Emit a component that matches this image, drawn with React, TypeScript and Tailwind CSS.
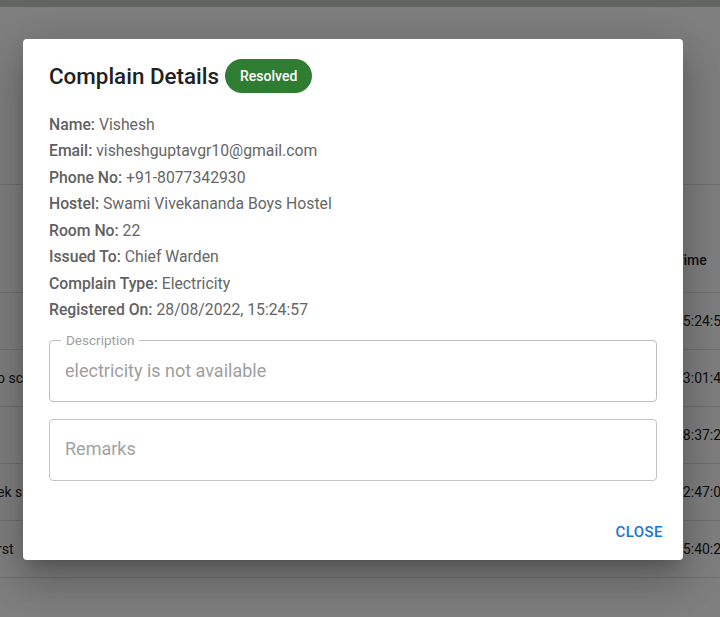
import React from "react";

const details: [string, string][] = [
  ["Name:", "Vishesh"],
  ["Email:", "visheshguptavgr10@gmail.com"],
  ["Phone No:", "+91-8077342930"],
  ["Hostel:", "Swami Vivekananda Boys Hostel"],
  ["Room No:", "22"],
  ["Issued To:", "Chief Warden"],
  ["Complain Type:", "Electricity"],
  ["Registered On:", "28/08/2022, 15:24:57"],
];

const rows: [string, string][] = [
  ["", "15:24:57"],
  ["o school is not open", "13:01:45"],
  ["", "18:37:21"],
  ["ek sink is broken", "12:47:03"],
  ["rst", "15:40:22"],
];

export default function App() {
  return (
    <div
      className="relative w-[720px] h-[617px] overflow-hidden bg-white"
      style={{ fontFamily: "Roboto, 'Liberation Sans', sans-serif" }}
    >
      {/* background page */}
      <div className="h-[7px] bg-[#c2ccc6]" />
      <div className="h-[177px]" />
      <div className="border-t border-[#e0e0e0]">
        <div className="grid grid-cols-[675px_1fr] h-[107px] items-end pb-[22px] text-[14px] leading-[20px] font-medium text-[#212121] whitespace-nowrap">
          <div />
          <div>Time</div>
        </div>
        {rows.map(([l, r], i) => (
          <div
            key={i}
            className="grid grid-cols-[675px_1fr] h-[57px] items-center border-t border-[#e0e0e0] text-[14px] leading-[20px] text-[#212121] whitespace-nowrap"
          >
            <div className="-ml-[3px] overflow-hidden">{l}</div>
            <div>{r}</div>
          </div>
        ))}
        <div className="border-t border-[#e0e0e0]" />
      </div>

      {/* backdrop */}
      <div className="absolute inset-0 bg-black/50" />

      {/* dialog */}
      <div className="absolute left-[23px] top-[39px] w-[660px] h-[521px] bg-white rounded-[4px] shadow-[0px_11px_15px_-7px_rgba(0,0,0,0.2),0px_24px_38px_3px_rgba(0,0,0,0.14),0px_9px_46px_8px_rgba(0,0,0,0.12)] flex flex-col">
        <div className="pt-[20px] px-[26px]">
          <div className="flex items-center h-[34px] gap-[6px]">
            <span className="text-[22.4px] leading-[30px] font-medium text-[#212121]">
              Complain Details
            </span>
            <span className="h-[34px] px-[15px] rounded-full bg-[#2e7d32] text-white text-[14px] font-medium flex items-center">
              Resolved
            </span>
          </div>

          <div className="mt-[19px] text-[15.75px] leading-[26.43px] text-[#666666]">
            {details.map(([k, v]) => (
              <div key={k}>
                <span className="font-medium text-[#616161]">{k}</span> {v}
              </div>
            ))}
          </div>

          <div className="relative mt-[16px] h-[62px] border border-[#bdbdbd] rounded-[4px] flex items-center px-[15px]">
            <span className="absolute left-[11px] -top-[10px] px-[5px] bg-white text-[13.5px] leading-[18px] text-[#9e9e9e]">
              Description
            </span>
            <span className="text-[18px] leading-[24px] text-[#9e9e9e]">
              electricity is not available
            </span>
          </div>

          <div className="mt-[17px] h-[62px] border border-[#c4c4c4] rounded-[4px] flex items-center px-[15px] pb-[2px]">
            <span className="text-[18px] leading-[24px] text-[#a2a2a2]">Remarks</span>
          </div>
        </div>

        <div className="mt-[34px] flex justify-end pr-[12px]">
          <button className="h-[36px] px-[8px] text-[15px] font-medium uppercase tracking-[0.46px] text-[#1976d2] rounded-[4px]">
            Close
          </button>
        </div>
      </div>
    </div>
  );
}
